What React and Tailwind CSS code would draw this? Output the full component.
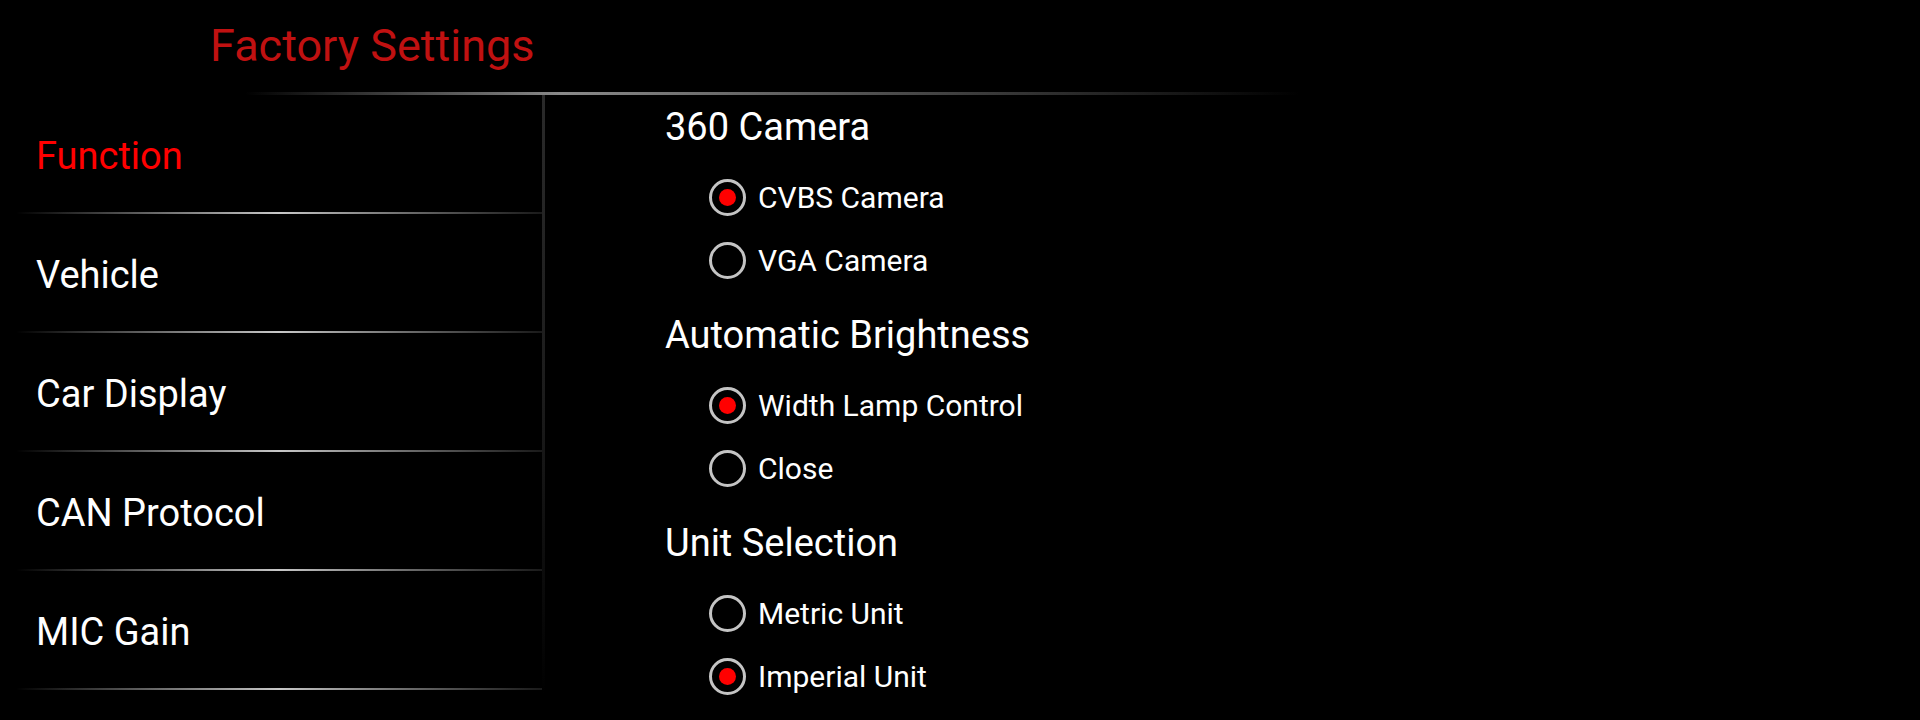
import { useState } from "react";

const menu = ["Function", "Vehicle", "Car Display", "CAN Protocol", "MIC Gain"];

const sections = [
  { title: "360 Camera", options: ["CVBS Camera", "VGA Camera"], initial: 0 },
  { title: "Automatic Brightness", options: ["Width Lamp Control", "Close"], initial: 0 },
  { title: "Unit Selection", options: ["Metric Unit", "Imperial Unit"], initial: 1 },
];

function Radio({ checked }) {
  return (
    <div className="w-[37px] h-[37px] rounded-full border-[3px] border-[#c4c4c4] flex items-center justify-center shrink-0">
      {checked && <div className="w-[17px] h-[17px] rounded-full bg-[#ff0000]" />}
    </div>
  );
}

export default function App() {
  const [active, setActive] = useState(0);
  const [picked, setPicked] = useState(sections.map((s) => s.initial));

  return (
    <main className="w-[1920px] h-[720px] bg-black overflow-hidden font-['Roboto',sans-serif] text-white">
      <header className="h-[92px] flex items-center pl-[210px] pb-[2px]">
        <h1 className="text-[45px] leading-none text-[#c01111]">Factory Settings</h1>
      </header>
      <div className="h-[3px] ml-[245px] w-[1055px] bg-gradient-to-r from-transparent via-[#8a8a8a] via-30% to-transparent" />

      <div className="flex">
        <nav className="w-[542px] shrink-0">
          {menu.map((item, i) => (
            <button
              key={item}
              onClick={() => setActive(i)}
              className="block w-full text-left"
            >
              <div
                className={`h-[117px] flex items-center pl-[36px] pt-[5px] text-[38px] ${
                  i === active ? "text-[#ff0000]" : "text-white"
                }`}
              >
                {item}
              </div>
              <div className="h-[2px] ml-[16px] bg-gradient-to-r from-transparent via-[#c8c8c8] to-[#1a1a1a]" />
            </button>
          ))}
        </nav>
        <div className="w-[3px] h-[600px] bg-gradient-to-b from-[#2a2a2a] via-[#1c1c1c] to-transparent" />

        <section className="pl-[120px] pt-[10px]">
          {sections.map((s, si) => (
            <div key={s.title} className="mb-[21px]">
              <h2 className="h-[44px] flex items-center text-[38px] mb-[17px]">{s.title}</h2>
              {s.options.map((opt, oi) => (
                <label
                  key={opt}
                  onClick={() =>
                    setPicked((prev) => prev.map((v, k) => (k === si ? oi : v)))
                  }
                  className="h-[63px] flex items-center gap-[12px] pl-[44px] text-[30px] cursor-pointer"
                >
                  <Radio checked={picked[si] === oi} />
                  <span>{opt}</span>
                </label>
              ))}
            </div>
          ))}
        </section>
      </div>
    </main>
  );
}
